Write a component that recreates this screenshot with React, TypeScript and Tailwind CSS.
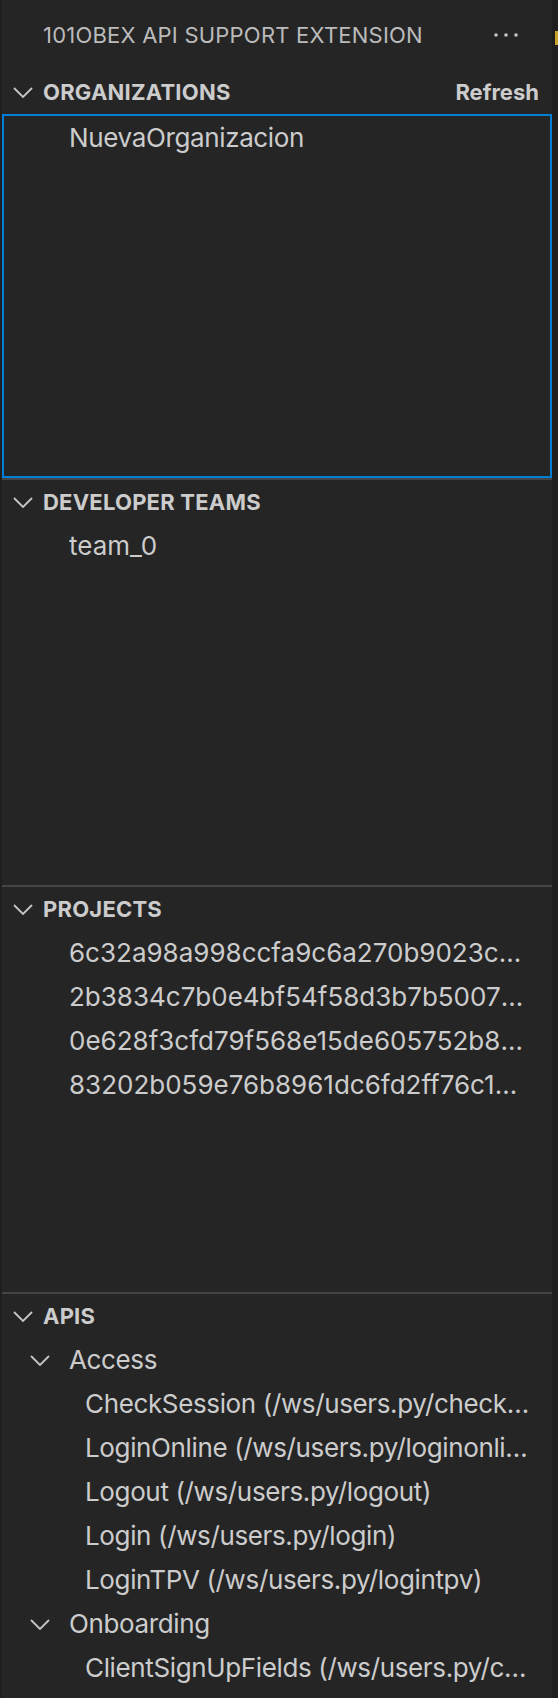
import React from "react";

const Chevron = ({ className = "" }: { className?: string }) => (
  <svg viewBox="0 0 20 11" className={className} fill="none">
    <polyline points="1,1 10,10 19,1" stroke="#c5c5c5" strokeWidth="1.8" strokeLinejoin="miter" />
  </svg>
);

const Row = ({
  children,
  pl,
  pr = "pr-[26px]",
  tight = true,
}: {
  children: React.ReactNode;
  pl: string;
  pr?: string;
  tight?: boolean;
}) => (
  <div className={`h-[44px] flex items-center ${pr} ${pl}`}>
    <span
      className={`truncate text-[26px] text-[#cccccc] leading-[34px] ${tight ? "tracking-[-0.014em]" : "tracking-normal"}`}
    >
      {children}
    </span>
  </div>
);

const Header = ({ title, action }: { title: string; action?: string }) => (
  <div className="h-[44px] flex items-center shrink-0">
    <Chevron className="w-[20px] h-[11px] ml-[11px]" />
    <span className="ml-[10px] text-[22px] font-bold text-[#cccccc] leading-none tracking-[0.01em]">{title}</span>
    <div className="flex-1" />
    {action && (
      <span className="mr-[13px] text-[22px] font-bold text-[#cccccc] leading-none">{action}</span>
    )}
  </div>
);

export default function App() {
  const projects = [
    "6c32a98a998ccfa9c6a270b9023c9f1a2e",
    "2b3834c7b0e4bf54f58d3b7b50071ac3e9",
    "0e628f3cfd79f568e15de605752b81c4d7",
    "83202b059e76b8961dc6fd2ff76c1e9a4b",
  ];
  const access = [
    "CheckSession (/ws/users.py/checksession)",
    "LoginOnline (/ws/users.py/loginonline)",
    "Logout (/ws/users.py/logout)",
    "Login (/ws/users.py/login)",
    "LoginTPV (/ws/users.py/logintpv)",
  ];
  return (
    <div
      className="w-[558px] h-[1698px] flex bg-[#1e1e1e] overflow-hidden"
      style={{ fontFamily: "Inter, 'Noto Sans', sans-serif" }}
    >
      <div className="w-[2px] h-full bg-[#1f1f1f] shrink-0" />
      <div className="w-[550px] h-full bg-[#252526] flex flex-col shrink-0">
        {/* Title */}
        <div className="h-[70px] flex items-center shrink-0">
          <span className="ml-[41px] text-[22px] text-[#bbbbbb] leading-none tracking-[0.01em]">
            101OBEX API SUPPORT EXTENSION
          </span>
          <div className="flex-1" />
          <svg width="26" height="6" viewBox="0 0 26 6" className="mr-[33px]">
            <circle cx="3" cy="3" r="1.8" fill="#c5c5c5" />
            <circle cx="13" cy="3" r="1.8" fill="#c5c5c5" />
            <circle cx="23" cy="3" r="1.8" fill="#c5c5c5" />
          </svg>
        </div>

        {/* Organizations */}
        <Header title="ORGANIZATIONS" action="Refresh" />
        <div className="h-[364px] border-2 border-[#007fd4] shrink-0">
          <Row pl="pl-[65px]">NuevaOrganizacion</Row>
        </div>

        {/* Developer teams */}
        <div className="border-t-2 border-[#444444] shrink-0">
          <Header title="DEVELOPER TEAMS" />
          <div className="h-[361px]">
            <Row pl="pl-[67px]" tight={false}>team_0</Row>
          </div>
        </div>

        {/* Projects */}
        <div className="border-t-2 border-[#444444] shrink-0">
          <Header title="PROJECTS" />
          <div className="h-[361px]">
            {projects.map((p) => (
              <Row key={p} pl="pl-[67px]" tight={false}>{p}</Row>
            ))}
          </div>
        </div>

        {/* APIs */}
        <div className="border-t-2 border-[#444444] flex-1">
          <Header title="APIS" />
          <div>
            <div className="h-[44px] flex items-center">
              <Chevron className="w-[20px] h-[11px] ml-[28px]" />
              <span className="ml-[19px] text-[26px] text-[#cccccc] leading-[34px] tracking-[-0.014em]">Access</span>
            </div>
            {access.map((a) => (
              <Row key={a} pl="pl-[83px]" pr="pr-[16px]">{a}</Row>
            ))}
            <div className="h-[44px] flex items-center">
              <Chevron className="w-[20px] h-[11px] ml-[28px]" />
              <span className="ml-[19px] text-[26px] text-[#cccccc] leading-[34px] tracking-[-0.014em]">Onboarding</span>
            </div>
            <Row pl="pl-[83px]" pr="pr-[23px]">ClientSignUpFields (/ws/users.py/clientsignupfields)</Row>
          </div>
        </div>
      </div>
      <div className="flex-1 h-full bg-[#1e1e1e] flex flex-col">
        <div className="h-[31px]" />
        <div className="h-[14px] w-full flex">
          <div className="w-[3px]" />
          <div className="flex-1 bg-[#c9a227]" />
        </div>
      </div>
    </div>
  );
}
